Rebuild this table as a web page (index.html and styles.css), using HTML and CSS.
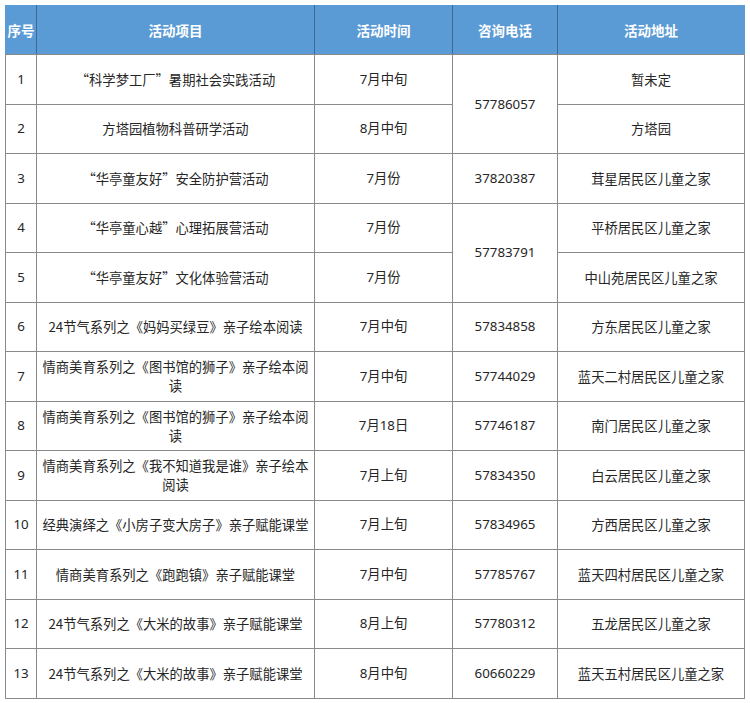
FILE: index.html
```html
<!DOCTYPE html>
<html lang="zh-CN">
<head>
<meta charset="utf-8">
<title>活动安排</title>
<link rel="stylesheet" href="styles.css">
</head>
<body>
<table class="sched">
  <colgroup>
    <col class="c-no">
    <col class="c-item">
    <col class="c-time">
    <col class="c-tel">
    <col class="c-addr">
  </colgroup>
  <thead>
    <tr>
      <th>序号</th>
      <th>活动项目</th>
      <th>活动时间</th>
      <th>咨询电话</th>
      <th>活动地址</th>
    </tr>
  </thead>
  <tbody>
    <tr><td class="num">1</td><td>“科学梦工厂”暑期社会实践活动</td><td class="num">7月中旬</td><td class="num" rowspan="2">57786057</td><td>暂未定</td></tr>
    <tr><td class="num">2</td><td>方塔园植物科普研学活动</td><td class="num">8月中旬</td><td>方塔园</td></tr>
    <tr><td class="num">3</td><td>“华亭童友好”安全防护营活动</td><td class="num">7月份</td><td class="num">37820387</td><td>茸星居民区儿童之家</td></tr>
    <tr><td class="num">4</td><td>“华亭童心越”心理拓展营活动</td><td class="num">7月份</td><td class="num" rowspan="2">57783791</td><td>平桥居民区儿童之家</td></tr>
    <tr><td class="num">5</td><td>“华亭童友好”文化体验营活动</td><td class="num">7月份</td><td>中山苑居民区儿童之家</td></tr>
    <tr><td class="num">6</td><td>24节气系列之《妈妈买绿豆》亲子绘本阅读</td><td class="num">7月中旬</td><td class="num">57834858</td><td>方东居民区儿童之家</td></tr>
    <tr><td class="num">7</td><td>情商美育系列之《图书馆的狮子》亲子绘本阅读</td><td class="num">7月中旬</td><td class="num">57744029</td><td>蓝天二村居民区儿童之家</td></tr>
    <tr><td class="num">8</td><td>情商美育系列之《图书馆的狮子》亲子绘本阅读</td><td class="num">7月18日</td><td class="num">57746187</td><td>南门居民区儿童之家</td></tr>
    <tr><td class="num">9</td><td>情商美育系列之《我不知道我是谁》亲子绘本阅读</td><td class="num">7月上旬</td><td class="num">57834350</td><td>白云居民区儿童之家</td></tr>
    <tr><td class="num">10</td><td>经典演绎之《小房子变大房子》亲子赋能课堂</td><td class="num">7月上旬</td><td class="num">57834965</td><td>方西居民区儿童之家</td></tr>
    <tr><td class="num">11</td><td>情商美育系列之《跑跑镇》亲子赋能课堂</td><td class="num">7月中旬</td><td class="num">57785767</td><td>蓝天四村居民区儿童之家</td></tr>
    <tr><td class="num">12</td><td>24节气系列之《大米的故事》亲子赋能课堂</td><td class="num">8月上旬</td><td class="num">57780312</td><td>五龙居民区儿童之家</td></tr>
    <tr><td class="num">13</td><td>24节气系列之《大米的故事》亲子赋能课堂</td><td class="num">8月中旬</td><td class="num">60660229</td><td>蓝天五村居民区儿童之家</td></tr>
  </tbody>
</table>
</body>
</html>
```
FILE: styles.css
```css
html, body {
  margin: 0;
  padding: 0;
  background: #ffffff;
}
body {
  padding: 5px 0 0 5px;
  font-family: "Noto Sans CJK SC", "Noto Sans", sans-serif;
  font-size: 13.3px;
  color: #262626;
}
.sched {
  border-collapse: collapse;
  table-layout: fixed;
  width: 739px;
}
.c-no { width: 31px; }
.c-item { width: 278px; }
.c-time { width: 138px; }
.c-tel { width: 105px; }
.c-addr { width: 187px; }
.sched th {
  height: 48px;
  background: #5b9bd5;
  color: #ffffff;
  font-weight: 700;
  font-size: 13.5px;
  text-align: center;
  white-space: nowrap;
  padding: 0;
  border-left: 1px solid #3b6a94;
  border-right: 1px solid #3b6a94;
  border-top: 1px solid #5b9bd5;
  border-bottom: 1px solid #8a8a8a;
}
.sched th:first-child {
  border-left-color: #5b9bd5;
}
.sched th:last-child {
  border-right-color: #5b9bd5;
}
.sched td {
  height: 48.5px;
  padding: 0 4px;
  text-align: center;
  vertical-align: middle;
  line-height: 19px;
  border: 1px solid #8a8a8a;
}
.sched td.num {
  font-family: "Noto Sans", "Noto Sans CJK SC", sans-serif;
}
.sched td:first-child {
  padding: 0 2px;
}
```
